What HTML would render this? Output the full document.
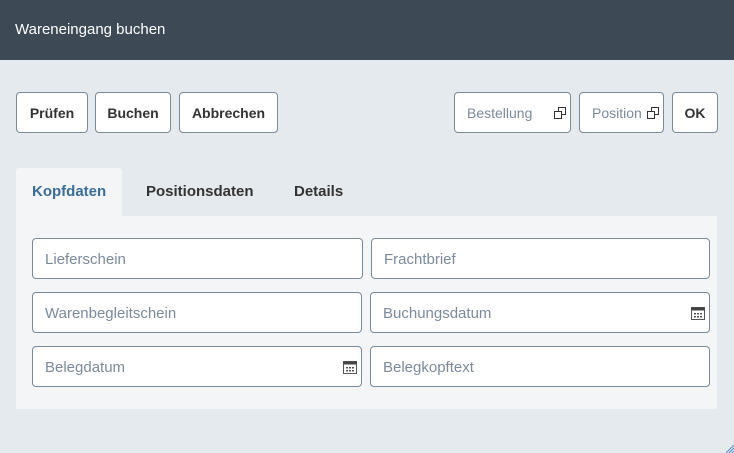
<!DOCTYPE html><html><head><style>
*{box-sizing:border-box;margin:0;padding:0}
body{width:734px;height:453px;background:#e4eaed;font-family:"Liberation Sans",sans-serif;position:relative;overflow:hidden}
.hd{position:absolute;left:0;top:0;width:734px;height:60px;background:#3d4955;color:#fff;font-size:15px;padding:21px 0 0 15px}
.b{position:absolute;top:92px;height:41px;background:#fff;border:1px solid #7a8a9a;border-radius:4px;font-size:14px;font-weight:bold;color:#333;display:flex;align-items:center;justify-content:center}
.b.g{color:#7b8a9c;font-weight:normal;justify-content:flex-start;padding-left:12px}
.ic{position:absolute;top:14px;width:12px;height:12px}
.tab{position:absolute;top:168px;height:48px;font-size:15px;font-weight:bold;color:#333;padding-top:15px}
.pn{position:absolute;left:16px;top:216px;width:701px;height:193px;background:#f3f5f7}
.in{position:absolute;height:41px;background:#fff;border:1px solid #7a8a9a;border-radius:4px;font-size:15px;color:#7b8a9c;padding:12px 0 0 12px}
.cal{position:absolute;right:4px;top:13px}
</style></head><body>
<div class="hd">Wareneingang buchen</div>
<div class="b" style="left:16px;width:72px">Prüfen</div>
<div class="b" style="left:95px;width:76px">Buchen</div>
<div class="b" style="left:179px;width:99px">Abbrechen</div>
<div class="b g" style="left:454px;width:117px">Bestellung<svg class="ic" style="right:4px" viewBox="0 0 12 12" fill="none" stroke="#333" stroke-width="1"><rect x="0.5" y="4.5" width="7" height="7"/><path d="M4.5 4.5V0.5h7v7h-4"/></svg></div>
<div class="b g" style="left:579px;width:85px">Position<svg class="ic" style="right:4px" viewBox="0 0 12 12" fill="none" stroke="#333" stroke-width="1"><rect x="0.5" y="4.5" width="7" height="7"/><path d="M4.5 4.5V0.5h7v7h-4"/></svg></div>
<div class="b" style="left:672px;width:46px">OK</div>
<div class="tab" style="left:16px;width:106px;background:#f3f5f7;color:#3b6d99;padding-left:16px;border-radius:3px 3px 0 0">Kopfdaten</div>
<div class="tab" style="left:146px">Positionsdaten</div>
<div class="tab" style="left:294px">Details</div>
<div class="pn"></div>
<div class="in" style="left:32px;top:238px;width:331px">Lieferschein</div>
<div class="in" style="left:371px;top:238px;width:339px">Frachtbrief</div>
<div class="in" style="left:32px;top:292px;width:330px">Warenbegleitschein</div>
<div class="in" style="left:370px;top:292px;width:340px">Buchungsdatum<svg class="cal" width="14" height="14" viewBox="0 0 14 14"><rect x="0.5" y="1.5" width="13" height="12" fill="none" stroke="#555"/><rect x="0.5" y="1.5" width="13" height="3" fill="#444"/><g fill="#555"><rect x="3" y="7" width="2" height="1.5"/><rect x="6" y="7" width="2" height="1.5"/><rect x="9" y="7" width="2" height="1.5"/><rect x="3" y="10" width="2" height="1.5"/><rect x="6" y="10" width="2" height="1.5"/><rect x="9" y="10" width="2" height="1.5"/></g></svg></div>
<div class="in" style="left:32px;top:346px;width:330px">Belegdatum<svg class="cal" width="14" height="14" viewBox="0 0 14 14"><rect x="0.5" y="1.5" width="13" height="12" fill="none" stroke="#555"/><rect x="0.5" y="1.5" width="13" height="3" fill="#444"/><g fill="#555"><rect x="3" y="7" width="2" height="1.5"/><rect x="6" y="7" width="2" height="1.5"/><rect x="9" y="7" width="2" height="1.5"/><rect x="3" y="10" width="2" height="1.5"/><rect x="6" y="10" width="2" height="1.5"/><rect x="9" y="10" width="2" height="1.5"/></g></svg></div>
<div class="in" style="left:370px;top:346px;width:340px">Belegkopftext</div>
<svg style="position:absolute;right:0;bottom:0" width="8" height="8" viewBox="0 0 8 8" stroke="#5a8ac0" stroke-width="1"><path d="M8 0L0 8M8 3L3 8M8 6L6 8"/></svg>
</body></html>
